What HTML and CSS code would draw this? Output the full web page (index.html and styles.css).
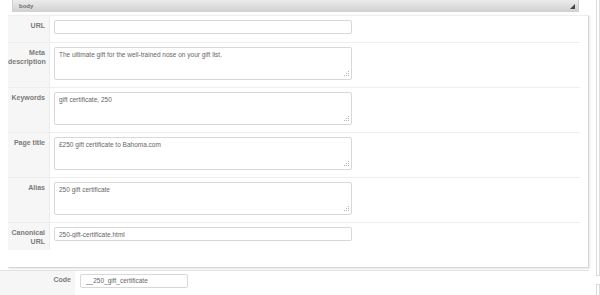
FILE: index.html
```html
<!DOCTYPE html>
<html lang="en">
<head>
  <meta charset="UTF-8">
  <title>seo_fields</title>
  <link rel="stylesheet" href="styles.css">
</head>
<body>
  <div class="page">
    <div class="main">
      <div class="bar">
        <span class="bar-title">body</span>
        <span class="bar-arrow"></span>
      </div>
      <div class="panel">
        <div class="row row-short">
          <label class="label">URL</label>
          <div class="field"><input class="input" type="text" value=""></div>
        </div>
        <div class="row">
          <label class="label">Meta description</label>
          <div class="field">
            <div class="area">The ultimate gift for the well-trained nose on your gift list.
              <svg class="grip" width="7" height="7" viewBox="0 0 7 7"><g fill="#b4b4b4"><rect x="5" y="0" width="1" height="1"/><rect x="3" y="2" width="1" height="1"/><rect x="5" y="2" width="1" height="1"/><rect x="1" y="4" width="1" height="1"/><rect x="3" y="4" width="1" height="1"/><rect x="5" y="4" width="1" height="1"/></g></svg>
            </div>
          </div>
        </div>
        <div class="row">
          <label class="label">Keywords</label>
          <div class="field">
            <div class="area">gift certificate, 250
              <svg class="grip" width="7" height="7" viewBox="0 0 7 7"><g fill="#b4b4b4"><rect x="5" y="0" width="1" height="1"/><rect x="3" y="2" width="1" height="1"/><rect x="5" y="2" width="1" height="1"/><rect x="1" y="4" width="1" height="1"/><rect x="3" y="4" width="1" height="1"/><rect x="5" y="4" width="1" height="1"/></g></svg>
            </div>
          </div>
        </div>
        <div class="row">
          <label class="label">Page title</label>
          <div class="field">
            <div class="area">£250 gift certificate to Bahoma.com
              <svg class="grip" width="7" height="7" viewBox="0 0 7 7"><g fill="#b4b4b4"><rect x="5" y="0" width="1" height="1"/><rect x="3" y="2" width="1" height="1"/><rect x="5" y="2" width="1" height="1"/><rect x="1" y="4" width="1" height="1"/><rect x="3" y="4" width="1" height="1"/><rect x="5" y="4" width="1" height="1"/></g></svg>
            </div>
          </div>
        </div>
        <div class="row">
          <label class="label">Alias</label>
          <div class="field">
            <div class="area">250 gift certificate
              <svg class="grip" width="7" height="7" viewBox="0 0 7 7"><g fill="#b4b4b4"><rect x="5" y="0" width="1" height="1"/><rect x="3" y="2" width="1" height="1"/><rect x="5" y="2" width="1" height="1"/><rect x="1" y="4" width="1" height="1"/><rect x="3" y="4" width="1" height="1"/><rect x="5" y="4" width="1" height="1"/></g></svg>
            </div>
          </div>
        </div>
        <div class="row row-short last">
          <label class="label">Canonical URL</label>
          <div class="field"><input class="input" type="text" value="250-gift-certificate.html"></div>
        </div>
      </div>
      <div class="code-row">
        <label class="code-label">Code</label>
        <div class="code-field"><div class="input code-input">__250_gift_certificate</div></div>
      </div>
    </div>
    <div class="side">
      <div class="side-box"></div>
      <div class="side-box second"></div>
    </div>
  </div>
</body>
</html>
```

FILE: styles.css
```css
body {
  margin: 0;
  background: #fff;
  font-family: "Liberation Sans", Arial, sans-serif;
  color: #555;
  overflow: hidden;
}

.page {
  display: flex;
  height: 295px;
}

.main {
  width: 589px;
  flex-shrink: 0;
}

.bar {
  margin: 0 10px 0 12px;
  height: 12px;
  background: linear-gradient(#ececec, #d2d2d2);
  border: 1px solid #d0d0d0;
  border-top: none;
  box-sizing: border-box;
  display: flex;
  align-items: center;
  justify-content: space-between;
  padding: 0 3px 0 6px;
}

.bar-title {
  font-size: 6px;
  font-weight: bold;
  color: #707070;
}

.bar-arrow {
  width: 0;
  height: 0;
  border-left: 5px solid transparent;
  border-bottom: 5px solid #444;
  margin-top: 2px;
}

.panel {
  margin: 3px 0 0 8px;
  border-top: 1px solid #eee;
  border-right: 1px solid #d6d6d6;
  border-bottom: 1px solid #d6d6d6;
  box-shadow: 1px 1px 2px #e6e6e6;
  padding-bottom: 17px;
}

.row {
  display: grid;
  grid-template-columns: 42px 1fr;
  height: 45px;
  border-bottom: 1px solid #eee;
  margin-right: 8px;
  box-sizing: border-box;
}

.row-short {
  height: 27px;
}

.row.last {
  border-bottom: none;
  height: 27px;
}

.label {
  background: #f6f6f6;
  border-right: 1px solid #ececec;
  text-align: right;
  font-size: 7px;
  font-weight: bold;
  line-height: 9px;
  color: #7a7a7a;
  padding: 5px 4px 0 0;
}

.field {
  padding: 4px 0 0 4px;
}

.input {
  display: block;
  width: 298px;
  height: 14px;
  line-height: 12px;
  box-sizing: border-box;
  border: 1px solid #d8d8d8;
  border-radius: 2px;
  font-family: "Liberation Sans", Arial, sans-serif;
  font-size: 6.5px;
  color: #666;
  padding: 0 4px;
  margin: 0;
  outline: none;
  background: #fff;
}

.area {
  position: relative;
  width: 298px;
  height: 33px;
  box-sizing: border-box;
  border: 1px solid #d8d8d8;
  border-radius: 2px;
  font-size: 6.5px;
  color: #666;
  padding: 3px 4px;
  line-height: 8px;
}

.grip {
  position: absolute;
  right: 1px;
  bottom: 1px;
}

.code-row {
  display: grid;
  grid-template-columns: 75px 1fr;
  height: 28px;
  margin-top: 2px;
  border-top: 1px solid #e4e4e4;
}

.code-label {
  background: #f6f6f6;
  text-align: right;
  font-size: 7px;
  font-weight: bold;
  color: #7a7a7a;
  padding: 5px 4px 0 0;
}

.code-field {
  padding: 3px 0 0 5px;
}

.code-input {
  width: 108px;
  padding-left: 5px;
}

.side {
  margin-left: 7px;
  flex: 1;
}

.side-box {
  height: 275px;
  border: 1px solid #ddd;
  border-top: none;
  box-shadow: 1px 0 2px #eee;
}

.side-box.second {
  height: 20px;
  margin-top: 8px;
  border-top: 1px solid #ddd;
}
```
